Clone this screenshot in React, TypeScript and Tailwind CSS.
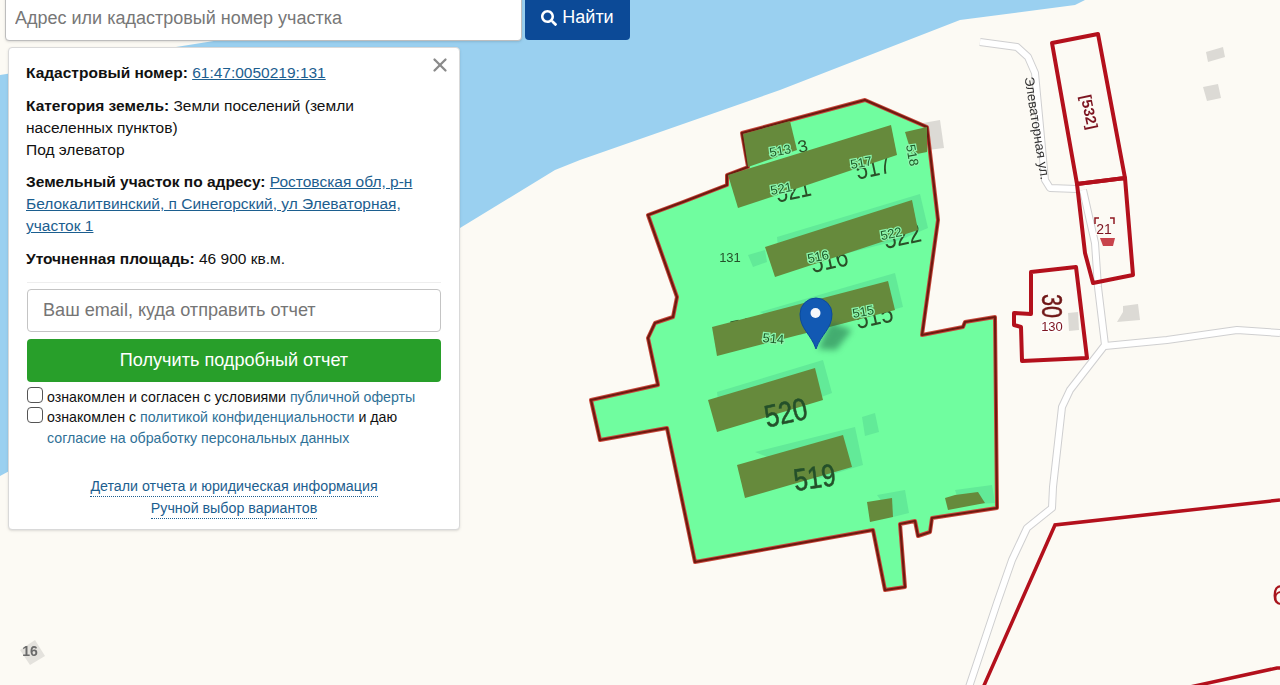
import { FaSearch } from "react-icons/fa";
import { X } from "lucide-react";

// map geometry, taken straight off the picture
const parcel =
  "865,100 927,127 938,220 922,335 963,327 965,322 995,317 997,508 932,518 930,532 918,536 915,521 900,524 905,587 885,590 873,530 695,562 667,428 600,440 591,400 658,385 648,338 655,323 673,317 677,297 648,215 683,202 727,185 727,175 748,167 742,133";

const lightShapes = [
  "777,237 920,194 928,228 900,240 780,270",
  "748,255 765,250 767,262 753,267",
  "760,312 895,273 903,307 800,335",
  "717,392 823,360 832,393 800,405 720,420",
  "755,452 855,427 863,465 820,478",
  "862,417 875,413 879,432 865,436",
  "877,495 905,490 909,513 893,517",
  "955,490 992,485 995,503 960,505",
];

const buildings = [
  "743,134 790,121 797,150 748,167",
  "728,175 891,125 897,155 738,208",
  "905,132 927,127 927,152 912,155",
  "765,247 912,200 918,230 775,277",
  "712,327 888,281 895,310 717,356",
  "708,400 815,368 823,400 717,432",
  "737,465 843,435 852,467 745,498",
  "867,502 892,498 893,517 870,522",
  "945,498 955,495 978,492 985,503 948,510",
];

const grayBuildings = [
  "923,123 940,120 944,148 928,150",
  "1206,52 1223,47 1225,57 1208,62",
  "1203,87 1218,84 1221,98 1207,101",
  "1117,322 1140,320 1138,304 1123,306 1123,312",
  "1068,313 1078,312 1079,330 1069,331",
];

const redParcels = [
  "1052,43 1098,34 1125,178 1077,184",
  "1077,184 1125,178 1133,275 1093,283 1085,253",
  "1031,272 1076,267 1087,358 1022,361 1021,327 1014,325 1014,313 1031,314",
];

const roads = [
  "M968 690 L997 603 L1012 560 L1027 528 L1052 508 L1053 487 L1062 407 L1070 390 L1105 345 L1098 287 L1095 243 L1083 190",
  "M1105 346 L1167 340 L1237 330 L1280 333",
  "M980 42 L1017 47 L1028 57 L1035 73 L1045 180 L1050 188 L1077 189",
];

// big numbers sit under the buildings, only their lower half shows
const bigLabels = [
  { t: "3", x: 804, y: 152, w: 10, fs: 17 },
  { t: "517", x: 875, y: 176, w: 36, fs: 28 },
  { t: "521", x: 795, y: 199, w: 36, fs: 28 },
  { t: "516", x: 831, y: 269, w: 38, fs: 28 },
  { t: "522", x: 904, y: 245, w: 38, fs: 28 },
  { t: "515", x: 876, y: 325, w: 38, fs: 28 },
  { t: "514", x: 750, y: 337, w: 36, fs: 28 },
];

const smallLabels = [
  { t: "513", x: 781, y: 155, r: -10 },
  { t: "517", x: 862, y: 167, r: -10 },
  { t: "521", x: 782, y: 193, r: -10 },
  { t: "518", x: 908, y: 156, r: 80 },
  { t: "516", x: 819, y: 261, r: -12 },
  { t: "522", x: 892, y: 238, r: -12 },
  { t: "515", x: 864, y: 316, r: -10 },
  { t: "514", x: 773, y: 343, r: 5 },
];

function MapLayer() {
  return (
    <svg
      viewBox="0 0 1280 685"
      className="absolute inset-0 h-full w-full blur-[0.4px]"
      style={{ fontFamily: '"Liberation Sans", Arial, sans-serif' }}
    >
      <rect width="1280" height="685" fill="#fcfaf4" />
      <polygon
        points="0,75 220,40 330,0 1085,0 1075,5 960,20 780,90 580,160 555,170 460,228 0,476"
        fill="#9ad0f0"
      />

      {roads.map((d) => (
        <path key={d} d={d} fill="none" stroke="#cfcfd0" strokeWidth="8" strokeLinejoin="round" />
      ))}
      {roads.map((d) => (
        <path key={d + "w"} d={d} fill="none" stroke="#ffffff" strokeWidth="6" strokeLinejoin="round" />
      ))}

      {grayBuildings.map((p) => (
        <polygon key={p} points={p} fill="#dcdad5" />
      ))}
      <polygon points="1100,238 1115,238 1113,246 1103,246" fill="#c8444c" />

      <polygon points={parcel} fill="#70fd9f" stroke="#c8483c" strokeWidth="4" strokeLinejoin="round" />
      <polygon points={parcel} fill="none" stroke="#6e1a10" strokeWidth="2.2" strokeLinejoin="round" />

      {lightShapes.map((p) => (
        <polygon key={p} points={p} fill="#62ea98" />
      ))}

      {bigLabels.map((l) => (
        <text
          key={l.t + l.x}
          x={l.x}
          y={l.y}
          fontSize={l.fs}
          fill="#2a4f28"
          textAnchor="middle"
          textLength={l.w}
          lengthAdjust="spacingAndGlyphs"
          transform={`rotate(-12 ${l.x} ${l.y})`}
        >
          {l.t}
        </text>
      ))}

      {buildings.map((p) => (
        <polygon key={p} points={p} fill="#668a3c" />
      ))}

      {smallLabels.map((l) => (
        <text
          key={l.t + l.x}
          x={l.x}
          y={l.y}
          fontSize="13"
          fill="#1f5c2a"
          stroke="#8cf5ac"
          strokeWidth="2.5"
          paintOrder="stroke"
          textAnchor="middle"
          transform={`rotate(${l.r} ${l.x} ${l.y})`}
        >
          {l.t}
        </text>
      ))}

      <text x="730" y="262" fontSize="13" fill="#24502a" textAnchor="middle">
        131
      </text>
      <text
        x="788"
        y="423"
        fontSize="31"
        fill="#24502a"
        stroke="#24502a"
        strokeWidth="0.6"
        textAnchor="middle"
        textLength={43}
        lengthAdjust="spacingAndGlyphs"
        transform="rotate(-12 788 423)"
      >
        520
      </text>
      <text
        x="816"
        y="488"
        fontSize="31"
        fill="#24502a"
        stroke="#24502a"
        strokeWidth="0.6"
        textAnchor="middle"
        textLength={42}
        lengthAdjust="spacingAndGlyphs"
        transform="rotate(-8 816 488)"
      >
        519
      </text>

      {redParcels.map((p) => (
        <polygon key={p} points={p} fill="none" stroke="#b3101c" strokeWidth="4" strokeLinejoin="round" />
      ))}
      <path d="M982 690 L1055 525 L1280 500" fill="none" stroke="#b3101c" strokeWidth="3.5" />
      <path d="M1190 687 L1277 668 L1280 668" fill="none" stroke="#b3101c" strokeWidth="3.5" />

      <text x="1272" y="605" fontSize="30" fill="#a8141c">
        6
      </text>

      <text x="1036" y="125" fontSize="13.5" fill="#333333" textAnchor="middle" transform="rotate(81 1032 125)">
        Элеваторная ул.
      </text>
      <text
        x="1089"
        y="117"
        fontSize="15"
        fontWeight="700"
        fill="#7c1420"
        stroke="#fcfaf4"
        strokeWidth="2"
        paintOrder="stroke"
        textAnchor="middle"
        transform="rotate(78 1089 112)"
      >
        [532]
      </text>
      {/* corner ticks round the 21 */}
      <path d="M1095 224 V218 H1099 M1114 224 V218 H1110" fill="none" stroke="#8e1820" strokeWidth="1.5" />
      <text x="1104" y="234" fontSize="14" fill="#7c1420" stroke="#fcfaf4" strokeWidth="2" paintOrder="stroke" textAnchor="middle">
        21
      </text>
      <text
        x="1052"
        y="316"
        fontSize="29"
        fill="#701818"
        stroke="#701818"
        strokeWidth="0.5"
        textAnchor="middle"
        textLength={24}
        lengthAdjust="spacingAndGlyphs"
        transform="rotate(90 1052 306)"
      >
        30
      </text>
      <text x="1052" y="331" fontSize="13" fill="#7c1420" stroke="#ffffff" strokeWidth="3" paintOrder="stroke" textAnchor="middle">
        130
      </text>

      <polygon points="20,650 35,640 45,656 30,665" fill="#e4e2dd" />
      <text x="30" y="656" fontSize="14" fill="#6a6a6a" fontWeight="700" textAnchor="middle">
        16
      </text>

      {/* marker */}
      <polygon points="818,349 830,322 852,330 836,350" fill="#1f6b4a" opacity="0.55" className="blur-[3px]" />
      <path
        d="M816 349 C811 334 800 329 800 314 A16 16 0 0 1 832 314 C832 329 821 334 816 349 Z"
        fill="#1259b3"
        stroke="#0b4a9c"
        strokeWidth="1"
      />
      <circle cx="815.5" cy="313" r="5" fill="#f4f7fb" />
    </svg>
  );
}

export default function App() {
  return (
    <div
      className="relative h-[685px] w-[1280px] overflow-hidden text-[#111]"
      style={{ fontFamily: '"Liberation Sans", Arial, sans-serif' }}
    >
      <MapLayer />

      {/* search */}
      <div className="absolute left-[5px] top-[-7px] flex items-start gap-[3px]">
        <input
          placeholder="Адрес или кадастровый номер участка"
          className="h-[48px] w-[517px] rounded border border-[#bdbdbd] bg-white px-[9px] pt-[2px] text-[18px] shadow-sm outline-none placeholder:text-[#777]"
        />
        <button className="flex h-[47px] w-[105px] items-center justify-center gap-[5px] rounded bg-[#0c4a97] pt-[2px] text-[18px] text-white">
          <FaSearch className="h-[16px] w-[16px]" />
          Найти
        </button>
      </div>

      {/* info panel */}
      <div className="absolute left-[8px] top-[47px] w-[452px] rounded border border-[#d9d9d9] bg-white px-[18px] pb-[10px] pt-[14px] text-[15.5px] leading-[22px] shadow-sm">
        <button className="absolute right-[8px] top-[6px] text-[#8a8a8a]">
          <X className="h-[22px] w-[22px]" strokeWidth={2.5} />
        </button>

        <div className="-ml-px">
          <p>
            <b>Кадастровый номер:</b>{" "}
            <a className="text-[#1c5e8f] underline">61:47:0050219:131</a>
          </p>
          <p className="mt-[10.5px] pr-[60px]">
            <b>Категория земель:</b> Земли поселений (земли населенных пунктов)
            <br />
            Под элеватор
          </p>
          <p className="mt-[10.5px]">
            <b>Земельный участок по адресу:</b>{" "}
            <a className="text-[#1c5e8f] underline">
              Ростовская обл, р-н Белокалитвинский, п Синегорский, ул
              Элеваторная, участок 1
            </a>
          </p>
          <p className="mt-[10.5px]">
            <b>Уточненная площадь:</b> 46 900 кв.м.
          </p>
        </div>

        <div className="mt-[12px] border-t border-[#eeeeee] pt-[6px]">
          <input
            placeholder="Ваш email, куда отправить отчет"
            className="block h-[43px] w-full rounded border border-[#c4c4c4] bg-white px-[15px] text-[18.1px] outline-none placeholder:text-[#757575]"
          />
          <button className="mt-[7px] block h-[43px] w-full rounded bg-[#289f2a] text-[18.1px] text-white">
            Получить подробный отчет
          </button>
        </div>

        <div className="mt-[5px] text-[14.2px] leading-[20.5px]">
          <label className="flex gap-[4px]">
            <span className="h-[16px] w-[16px] shrink-0 rounded-[4px] border border-[#555] bg-white" />
            <span>
              ознакомлен и согласен с условиями{" "}
              <a className="text-[#2f7197]">публичной оферты</a>
            </span>
          </label>
          <label className="flex gap-[4px]">
            <span className="h-[16px] w-[16px] shrink-0 rounded-[4px] border border-[#555] bg-white" />
            <span>
              ознакомлен с{" "}
              <a className="text-[#2f7197]">политикой конфиденциальности</a> и
              даю{" "}
              <a className="text-[#2f7197]">
                согласие на обработку персональных данных
              </a>
            </span>
          </label>
        </div>

        <div className="mt-[28px] flex flex-col items-center gap-[1px] text-[14.25px] text-[#1c5e8f]">
          <a className="border-b border-dotted border-[#1c5e8f] leading-[20px]">
            Детали отчета и юридическая информация
          </a>
          <a className="border-b border-dotted border-[#1c5e8f] leading-[20px]">
            Ручной выбор вариантов
          </a>
        </div>
      </div>
    </div>
  );
}
